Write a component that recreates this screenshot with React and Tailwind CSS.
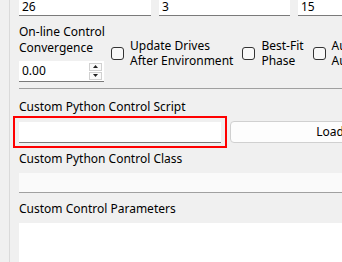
import React from "react";

function Check({ lines }) {
  return (
    <div className="flex items-center gap-[6px]">
      <div className="w-[13px] h-[13px] rounded-[3px] border border-[#333] bg-[#f8f8f8] shrink-0" />
      <div className="leading-[15px] whitespace-nowrap">
        {lines.map((l, i) => (
          <div key={i}>{l}</div>
        ))}
      </div>
    </div>
  );
}

export default function App() {
  return (
    <div
      className="w-[342px] h-[262px] bg-[#f0f0f0] overflow-hidden flex text-[12px] text-black"
      style={{ fontFamily: '"Noto Sans", "Segoe UI", sans-serif' }}
    >
      <div className="w-[10px] shrink-0 border-r border-[#dadada]" />
      <div className="flex-1 pl-[9px] flex flex-col min-w-0">
        {/* top inputs */}
        <div className="flex gap-[8px] h-[16px] shrink-0">
          <div className="w-[132px] shrink-0 bg-white border-b border-[#7a7a7a] pl-[3px] leading-[14px]">26</div>
          <div className="w-[131px] shrink-0 bg-white border-b border-[#7a7a7a] pl-[3px] leading-[14px]">3</div>
          <div className="w-[60px] shrink-0 bg-white border-b border-[#7a7a7a] pl-[3px] leading-[14px]">15</div>
        </div>

        {/* row 2 */}
        <div className="flex items-center mt-[8px] shrink-0">
          <div className="w-[85px] shrink-0">
            <div className="leading-[16px] whitespace-nowrap">On-line Control</div>
            <div className="leading-[16px] whitespace-nowrap">Convergence</div>
            <div className="mt-[5px] h-[21px] bg-white border-b border-[#7a7a7a] flex items-center">
              <span className="pl-[3px] flex-1">0.00</span>
              <div className="w-[13px] h-[17px] mr-[2px] flex flex-col gap-[1px]">
                <div className="flex-1 border border-[#d0d0d0] bg-[#fafafa] flex items-center justify-center">
                  <svg width="5" height="3" viewBox="0 0 5 3"><path d="M2.5 0L5 3H0z" fill="#222" /></svg>
                </div>
                <div className="flex-1 border border-[#d0d0d0] bg-[#fafafa] flex items-center justify-center">
                  <svg width="5" height="3" viewBox="0 0 5 3"><path d="M0 0H5L2.5 3z" fill="#222" /></svg>
                </div>
              </div>
            </div>
          </div>
          <div className="ml-[7px] flex items-center gap-[9px]">
            <Check lines={["Update Drives", "After Environment"]} />
            <Check lines={["Best-Fit", "Phase"]} />
            <Check lines={["Auto", "Auto"]} />
          </div>
        </div>

        <div className="mt-[6px] h-[1px] bg-[#a0a0a0] shrink-0" />

        <div className="mt-[10px] leading-[16px] whitespace-nowrap">Custom Python Control Script</div>
        <div className="mt-[6px] flex gap-[9px] items-end shrink-0">
          <div className="relative w-[202px] shrink-0">
            <div className="h-[21px] bg-white border-b border-[#7a7a7a]" />
            <div className="absolute left-[-6px] right-[-6px] top-[-6px] bottom-[-5px] border-2 border-[#ff0000]" />
          </div>
          <div className="w-[200px] shrink-0 h-[22px] bg-[#fdfdfd] border border-[#d0d0d0] rounded-[4px] flex items-center justify-center">
            Load
          </div>
        </div>

        <div className="mt-[8px] leading-[16px] whitespace-nowrap">Custom Python Control Class</div>
        <div className="mt-[6px] h-[20px] bg-[#fafafa] border-b border-[#a0a0a0] shrink-0" />

        <div className="mt-[8px] leading-[16px] whitespace-nowrap">Custom Control Parameters</div>
        <div className="mt-[6px] flex-1 bg-white" />
      </div>
    </div>
  );
}
